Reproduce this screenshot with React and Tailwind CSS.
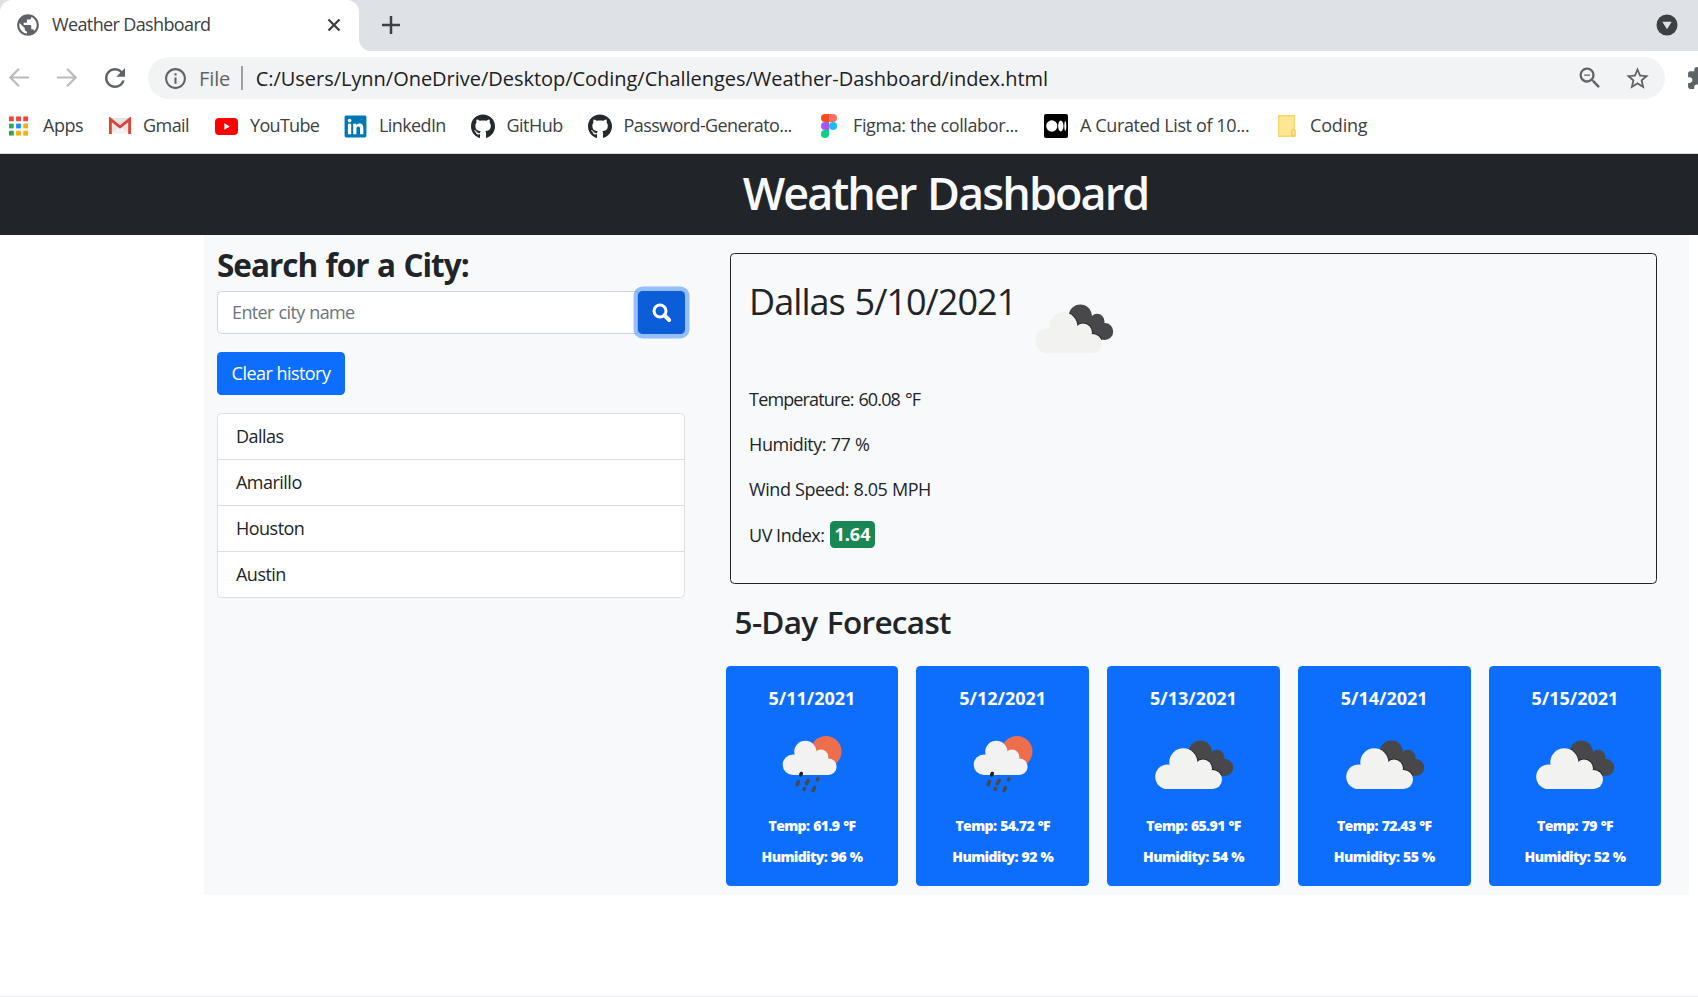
import { FaGithub, FaLinkedin } from "react-icons/fa";
import {
  MdExtension,
  MdInfoOutline,
  MdOutlineZoomOut,
  MdPublic,
  MdRefresh,
  MdStarBorder,
} from "react-icons/md";

function AppsIcon() {
  const colors = ["#f44336", "#f44336", "#f44336", "#34a853", "#1a90ff", "#fbae05", "#34a053", "#fbae05", "#fbae05"];
  return (
    <svg width="22" height="22" viewBox="0 0 22 22" className="mr-[3px]">
      {colors.map((c, i) => (
        <rect key={i} x={1 + (i % 3) * 7.5} y={1 + Math.floor(i / 3) * 7.5} width="5" height="5" fill={c} />
      ))}
    </svg>
  );
}

function GmailIcon() {
  return (
    <svg width="24" height="18" viewBox="0 0 24 18">
      <rect x="1" y="1" width="22" height="16" rx="1.5" fill="#e4e4e4" />
      <path d="M3 17 12 9l9 8z" fill="#f4f4f4" />
      <path d="M2.4 17V2.2L12 10l9.600-7.800V17" fill="none" stroke="#db4437" strokeWidth="2.800" />
    </svg>
  );
}

function YouTubeIcon() {
  return (
    <svg width="23" height="17" viewBox="0 0 23 17">
      <rect width="23" height="17" rx="4" fill="#f00" />
      <path d="M9.300 5.300v6.400l5.500-3.200z" fill="#fff" />
    </svg>
  );
}

function LinkedInIcon() {
  return (
    <span className="flex items-center justify-center bg-white">
      <FaLinkedin size={25} color="#0077b5" />
    </span>
  );
}

function GitHubIcon() {
  return <FaGithub size={25} color="#24292e" />;
}

function FigmaIcon() {
  return (
    <svg width="16" height="24" viewBox="0 0 16 24">
      <path d="M4 0h4v8H4a4 4 0 0 1 0-8z" fill="#f24e1e" />
      <path d="M8 0h4a4 4 0 0 1 0 8H8z" fill="#ff7262" />
      <path d="M4 8h4v8H4a4 4 0 0 1 0-8z" fill="#a259ff" />
      <circle cx="12" cy="12" r="4" fill="#1abcfe" />
      <path d="M4 16h4v4a4 4 0 1 1-4-4z" fill="#0acf83" />
    </svg>
  );
}

function MediumIcon() {
  return (
    <svg width="24" height="24" viewBox="0 0 24 24">
      <rect width="24" height="24" rx="2" fill="#000" />
      <ellipse cx="7.800" cy="12" rx="5.600" ry="5.800" fill="#fff" />
      <ellipse cx="16.800" cy="12" rx="2.700" ry="5.400" fill="#fff" />
      <ellipse cx="21.300" cy="12" rx="1" ry="4.800" fill="#fff" />
    </svg>
  );
}

function FolderIcon() {
  return (
    <svg width="18" height="22" viewBox="0 0 18 22">
      <path d="M.7.7h15.600v20.600H.7z" fill="#ffe694" stroke="#fdd663" strokeWidth="1.400" />
      <path d="M13.800 20.800v-5.300c0-1 3.300-1 3.300 0v5.300z" fill="#ffe694" stroke="#f0c84a" strokeWidth="1.200" />
    </svg>
  );
}

const bookmarks = [
  { label: "Apps", Icon: AppsIcon, slot: "w-[100px]", text: "ml-[11px] tracking-[-0.028em]" },
  { label: "Gmail", Icon: GmailIcon, slot: "w-[106px]", text: "ml-[11px] tracking-[-0.031em]" },
  { label: "YouTube", Icon: YouTubeIcon, slot: "w-[129px]", text: "ml-3 tracking-[-0.038em]" },
  { label: "LinkedIn", Icon: LinkedInIcon, slot: "w-[128px]", text: "ml-3 tracking-[-0.034em]" },
  { label: "GitHub", Icon: GitHubIcon, slot: "w-[117px]", text: "ml-[11.5px] tracking-[-0.028em]" },
  { label: "Password-Generato...", Icon: GitHubIcon, slot: "w-[229px]", text: "ml-[11.5px] tracking-[-0.033em]" },
  { label: "Figma: the collabor...", Icon: FigmaIcon, slot: "w-[227px]", text: "ml-3 tracking-[-0.022em]" },
  { label: "A Curated List of 10...", Icon: MediumIcon, slot: "w-[231px]", text: "ml-3 tracking-[-0.021em]" },
  { label: "Coding", Icon: FolderIcon, slot: "w-[100px]", text: "ml-[11px] tracking-[-0.01em]" },
];

function BrowserChrome() {
  return (
    <div className="border-b border-[#d6d8db] bg-white text-[#3c4043]">
      <div className="flex h-[51px] bg-white">
        <div className="bg-[#dee1e6]">
          <div className="flex h-full w-[359px] items-center rounded-t-xl bg-white pr-[15px] pb-px pl-[15px]">
            <MdPublic size={26} color="#5f6368" />
            <span className="ml-[11px] flex-1 pb-[2px] text-[18px] leading-6 font-[370] tracking-[-0.035em] whitespace-nowrap">
              Weather Dashboard
            </span>
            <svg width="20" height="20" viewBox="0 0 20 20" stroke="#3c4043" strokeWidth="2.300">
              <path d="M4.500 4.500l11 11M15.500 4.500l-11 11" />
            </svg>
          </div>
        </div>
        <div className="flex flex-1 items-center justify-between rounded-bl-xl bg-[#dee1e6] pr-5 pb-px pl-[22px]">
          <svg width="20" height="20" viewBox="0 0 20 20" stroke="#3c4043" strokeWidth="2.500">
            <path d="M1 10h18M10 1v18" />
          </svg>
          <svg width="22" height="22" viewBox="0 0 22 22">
            <circle cx="11" cy="11" r="10.500" fill="#3c4043" />
            <path d="M6.300 7.700h9.400L11 15.300z" fill="#dee1e6" />
          </svg>
        </div>
      </div>
      <div className="flex h-12 items-end overflow-hidden">
        <div className="flex h-[42px] w-[148px] shrink-0 items-center pl-2">
          <svg width="22" height="20" viewBox="0 0 22 20" fill="none" stroke="#babcbe" strokeWidth="2.200">
            <path d="M21 9.500H2.500M11 .8 2.300 9.500l8.700 8.700" />
          </svg>
          <svg className="ml-[26px]" width="22" height="20" viewBox="0 0 22 20" fill="none" stroke="#babcbe" strokeWidth="2.200">
            <path d="M1 9.500h18.500M11 .8l8.700 8.700-8.700 8.700" />
          </svg>
          <MdRefresh className="ml-[22px]" size={30} color="#5f6368" />
        </div>
        <div className="flex h-[42px] w-[1517px] shrink-0 items-center rounded-full bg-[#f1f3f4] pr-[14px] pl-[15px] text-[20px] font-[370]">
          <MdInfoOutline size={25} color="#5f6368" />
          <span className="ml-[11px] pt-px tracking-[-0.006em] text-[#5f6368]">File</span>
          <span className="ml-[11px] h-6 w-[2px] bg-[#9aa0a6]" />
          <span className="ml-[12.500px] flex-1 pt-px tracking-[-0.0015em] text-[#202124]">
            C:/Users/Lynn/OneDrive/Desktop/Coding/Challenges/Weather-Dashboard/index.html
          </span>
          <MdOutlineZoomOut size={28} color="#5f6368" />
          <MdStarBorder className="ml-[20px]" size={27} color="#5f6368" />
        </div>
        <div className="flex h-[42px] flex-1 items-center overflow-hidden pl-[21px]">
          <MdExtension className="shrink-0" size={25} color="#5f6368" />
        </div>
      </div>
      <nav className="flex h-[54px] items-center pl-2">
        {bookmarks.map(({ label, Icon, slot, text }, i) => (
          <div key={i} className={`flex shrink-0 items-center ${slot}`}>
            <span className="flex w-6 shrink-0 items-center justify-center">
              <Icon />
            </span>
            <span className={`pb-px text-[18px] leading-[23px] font-[370] whitespace-nowrap ${text}`}>{label}</span>
          </div>
        ))}
      </nav>
    </div>
  );
}

function CloudyIcon() {
  return (
    <svg className="ml-[3px]" width="80" height="50" viewBox="0 0 80 50">
      <defs>
        <clipPath id="dark-cloud">
          <circle cx="45.300" cy="12" r="11.500" />
          <circle cx="62" cy="17.300" r="7.500" />
          <circle cx="69.800" cy="27.500" r="8.400" />
          <path d="M40 12h16l14 16-3 8-20-8z" />
        </clipPath>
      </defs>
      <g clipPath="url(#dark-cloud)">
        <rect width="80" height="50" fill="#48484a" />
        <g fill="#2c2c2e">
          <circle cx="28.300" cy="22.300" r="15" />
          <circle cx="48" cy="28.500" r="10" />
          <circle cx="57.500" cy="39.500" r="10.500" />
        </g>
      </g>
      <g fill="#f2f2f1">
        <circle cx="12.500" cy="36.700" r="12.300" />
        <circle cx="28.300" cy="22.300" r="14" />
        <circle cx="48" cy="28.500" r="9" />
        <circle cx="57.500" cy="39.500" r="9.500" />
        <path d="M12.500 26h38l7 10v13h-45z" />
      </g>
    </svg>
  );
}

function RainIcon() {
  return (
    <svg className="-mt-[8px] -ml-[3px]" width="80" height="70" viewBox="0 0 80 70">
      <circle cx="56" cy="25.500" r="15.500" fill="#ec6e4c" />
      <g fill="#f2f2f2">
        <circle cx="23" cy="38.700" r="10.300" />
        <circle cx="35.300" cy="25.800" r="11.100" />
        <circle cx="51" cy="31" r="7.400" />
        <circle cx="58.300" cy="40.700" r="8.300" />
        <path d="M23 30h29l6 8v11H23z" />
      </g>
      <g stroke="#48484a" strokeWidth="3.600" strokeLinecap="round">
        <path d="M31.300 47.500l-.6 1.400" stroke="#222" />
        <path d="M28.400 55.600l-1.200 3M38.200 54.400l-1.800 3.200M47.900 52.900l-.4.700M34.500 62.700l-.3.600M44.400 61.600l-1.300 3" />
      </g>
    </svg>
  );
}

const cities = ["Dallas", "Amarillo", "Houston", "Austin"];

const forecast = [
  { date: "5/11/2021", Icon: RainIcon, temp: "61.9", humidity: 96 },
  { date: "5/12/2021", Icon: RainIcon, temp: "54.72", humidity: 92 },
  { date: "5/13/2021", Icon: CloudyIcon, temp: "65.91", humidity: 54 },
  { date: "5/14/2021", Icon: CloudyIcon, temp: "72.43", humidity: 55 },
  { date: "5/15/2021", Icon: CloudyIcon, temp: "79", humidity: 52 },
];

function SearchPanel() {
  return (
    <aside className="w-[468px] shrink-0">
      <h2 className="h-[56px] pt-[9px] text-[31.5px] leading-[42px] font-bold tracking-[-0.0320em] [word-spacing:0.04em]">
        Search for a City:
      </h2>
      <div className="flex h-[43px]">
        <div className="flex flex-1 items-center rounded-l-[4.5px] border border-[#ced4da] bg-white pl-[14px] tracking-[-0.034em] text-[#6c757d] [word-spacing:0.03em]">
          Enter city name
        </div>
        <button className="relative flex w-[47px] items-center justify-center rounded-[4.5px] bg-[#0b5ed7] shadow-[0_0_0_4.5px_rgba(49,132,253,0.5)]">
          <svg width="20" height="20" viewBox="0 0 20 20" fill="none" stroke="#fff">
            <circle cx="8" cy="8" r="6" strokeWidth="3" />
            <path d="M12.300 12.300l4.800 4.700" strokeWidth="4" strokeLinecap="round" />
          </svg>
        </button>
      </div>
      <button className="mt-[18px] flex h-[43px] w-32 items-center justify-center rounded-[4.5px] bg-[#0d6efd] tracking-[-0.030em] text-white">
        Clear history
      </button>
      <ul className="mt-[18px] rounded-[4.5px] border border-[#dfdfdf] bg-white">
        {cities.map((city, i) => (
          <li
            key={city}
            className={`flex items-center pl-[18px] tracking-[-0.029em] ${i < 3 ? "h-[46px] border-b border-[#dfdfdf]" : "h-[45px]"}`}
          >
            {city}
          </li>
        ))}
      </ul>
    </aside>
  );
}

function CurrentWeather() {
  return (
    <section className="mr-[4.5px] ml-[4.5px] h-[331px] rounded-[4.500px] border border-[#212529] pl-[18px]">
      <div className="flex h-[123px]">
        <h3 className="w-[267px] pt-[21px] text-[36px] leading-[54px] font-[380] tracking-[-0.0270em] whitespace-nowrap [word-spacing:0.04em]">
          Dallas 5/10/2021
        </h3>
        <div className="pt-[50px] pl-[16px]">
          <CloudyIcon />
        </div>
      </div>
      <p className="h-[45px] leading-[45px] tracking-[-0.048em] [word-spacing:0.06em]">Temperature: 60.08 °F</p>
      <p className="h-[45px] leading-[45px] tracking-[-0.026em] [word-spacing:0.02em]">Humidity: 77 %</p>
      <p className="h-[45px] leading-[45px] tracking-[-0.026em] [word-spacing:0.02em]">Wind Speed: 8.05 MPH</p>
      <p className="flex h-[45px] items-center">
        <span className="pt-px tracking-[-0.028em]">UV Index:</span>
        <span className="ml-[6px] flex h-[27px] w-[45px] items-center justify-center rounded-[4.500px] bg-[#198754] pr-px font-bold text-white">
          1.64
        </span>
      </p>
    </section>
  );
}

function ForecastCard({ date, Icon, temp, humidity }) {
  return (
    <div className="flex h-[220px] flex-col items-center rounded-[4.500px] bg-[#0d6efd] pt-[19px] font-bold text-white">
      <div className="leading-[27px]">{date}</div>
      <div className="mt-[13px] flex h-[80px] items-center justify-center">
        <Icon />
      </div>
      <div className="mt-[10px] text-[14px] leading-[21px] font-[780] tracking-[-0.0430em] [word-spacing:0.05em]">Temp: {temp} °F</div>
      <div className="mt-[10px] text-[14px] leading-[21px] font-[780] tracking-[-0.0450em] [word-spacing:0.05em]">Humidity: {humidity} %</div>
    </div>
  );
}

export default function App() {
  return (
    <div className="flex h-[997px] w-[1698px] flex-col overflow-hidden bg-white font-['Open_Sans','Noto_Sans',sans-serif]">
      <BrowserChrome />
      <header className="flex h-[81px] items-center justify-center bg-[#212529] pb-[4px] pl-[193px]">
        <h1 className="text-[45px] leading-[54px] font-[560] tracking-[-0.0430em] text-[#f8f9fa] [word-spacing:0.04em]">
          Weather Dashboard
        </h1>
      </header>
      <main className="mr-[9px] ml-[204px] flex h-[660px] bg-[#f8f9fb] pl-[13px] text-[18px] font-[370] text-[#212529]">
        <SearchPanel />
        <div className="ml-[40.6px] w-[935.75px] pt-[18px]">
          <CurrentWeather />
          <h3 className="h-[82px] pt-[16px] pl-[9px] text-[31.5px] leading-[44px] font-[570] tracking-[-0.0220em] [word-spacing:0.06em]">
            5-Day Forecast
          </h3>
          <div className="grid grid-cols-5 gap-[18px]">
            {forecast.map((day) => (
              <ForecastCard key={day.date} {...day} />
            ))}
          </div>
        </div>
      </main>
      <div className="mt-auto h-px bg-[#e8eaed]" />
    </div>
  );
}
